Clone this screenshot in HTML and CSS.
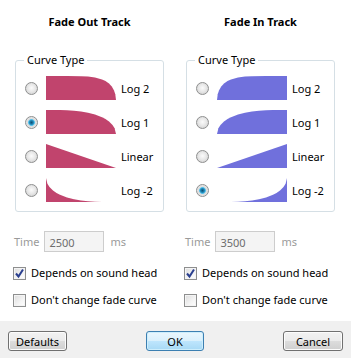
FILE: index.html
```html
<!DOCTYPE html>
<html lang="en">

<head>
    <meta charset="UTF-8">
    <title>Fade Track</title>
    <link rel="stylesheet" href="styles.css">
</head>

<body>
    <div class="dialog">
        <div class="columns">

            <!-- Fade out -->
            <section class="track fade-out">
                <h2 class="track-title">Fade Out Track</h2>
                <fieldset class="curve-group">
                    <legend>Curve Type</legend>
                    <label class="curve-row">
                        <input type="radio" name="outCurve">
                        <svg class="curve" viewBox="0 0 70 24"><path d="M0 24L0 0L21 0L35 .2L42 .6L49 1.5L56 3.4L59.5 5.1L63 7.6L65.8 10.6L67.9 14.2L69.3 18.2L70 24Z"/></svg>
                        <span>Log 2</span>
                    </label>
                    <label class="curve-row">
                        <input type="radio" name="outCurve" checked>
                        <svg class="curve" viewBox="0 0 70 24"><path d="M0 24L0 0L14 .1L21 .33L28 .78L35 1.55L42 2.75L49 4.54L56 7.23L59.5 9.09L63 11.5L66.5 14.9L68.6 18.2L70 24Z"/></svg>
                        <span>Log 1</span>
                    </label>
                    <label class="curve-row">
                        <input type="radio" name="outCurve">
                        <svg class="curve" viewBox="0 0 70 24"><path d="M0 0L70 24L0 24Z"/></svg>
                        <span>Linear</span>
                    </label>
                    <label class="curve-row">
                        <input type="radio" name="outCurve">
                        <svg class="curve" viewBox="0 0 70 24"><path d="M0 0L1.4 5.8L3.5 9.1L7 12.5L10.5 14.9L14 16.8L21 19.5L28 21.2L35 22.4L42 23.2L49 23.7L56 23.9L70 24L0 24Z"/></svg>
                        <span>Log -2</span>
                    </label>
                </fieldset>

                <div class="time-row">
                    <span class="dim">Time</span>
                    <input class="time-input" type="text" value="2500" disabled>
                    <span class="dim">ms</span>
                </div>
                <label class="check">
                    <span class="box"><svg viewBox="0 0 11 11"><path d="M2 5.5L4.5 8.5L9 1.5"/></svg></span>
                    Depends on sound head
                </label>
                <label class="check">
                    <span class="box"></span>
                    Don't change fade curve
                </label>
            </section>

            <!-- Fade in -->
            <section class="track fade-in">
                <h2 class="track-title">Fade In Track</h2>
                <fieldset class="curve-group">
                    <legend>Curve Type</legend>
                    <label class="curve-row">
                        <input type="radio" name="inCurve">
                        <svg class="curve" viewBox="0 0 70 24"><path d="M0 24L0 0L21 0L35 .2L42 .6L49 1.5L56 3.4L59.5 5.1L63 7.6L65.8 10.6L67.9 14.2L69.3 18.2L70 24Z"/></svg>
                        <span>Log 2</span>
                    </label>
                    <label class="curve-row">
                        <input type="radio" name="inCurve">
                        <svg class="curve" viewBox="0 0 70 24"><path d="M0 24L0 0L14 .1L21 .33L28 .78L35 1.55L42 2.75L49 4.54L56 7.23L59.5 9.09L63 11.5L66.5 14.9L68.6 18.2L70 24Z"/></svg>
                        <span>Log 1</span>
                    </label>
                    <label class="curve-row">
                        <input type="radio" name="inCurve">
                        <svg class="curve" viewBox="0 0 70 24"><path d="M0 0L70 24L0 24Z"/></svg>
                        <span>Linear</span>
                    </label>
                    <label class="curve-row">
                        <input type="radio" name="inCurve" checked>
                        <svg class="curve" viewBox="0 0 70 24"><path d="M0 0L1.4 5.8L3.5 9.1L7 12.5L10.5 14.9L14 16.8L21 19.5L28 21.2L35 22.4L42 23.2L49 23.7L56 23.9L70 24L0 24Z"/></svg>
                        <span>Log -2</span>
                    </label>
                </fieldset>

                <div class="time-row">
                    <span class="dim">Time</span>
                    <input class="time-input" type="text" value="3500" disabled>
                    <span class="dim">ms</span>
                </div>
                <label class="check">
                    <span class="box"><svg viewBox="0 0 11 11"><path d="M2 5.5L4.5 8.5L9 1.5"/></svg></span>
                    Depends on sound head
                </label>
                <label class="check">
                    <span class="box"></span>
                    Don't change fade curve
                </label>
            </section>
        </div>

        <!-- Buttons -->
        <div class="button-bar">
            <button type="button" class="btn btn-defaults">Defaults</button>
            <button type="button" class="btn btn-ok">OK</button>
            <button type="button" class="btn btn-cancel">Cancel</button>
        </div>
    </div>
</body>

</html>
```

FILE: styles.css
```css
body {
    margin: 0;
    font-family: "Noto Sans", "Open Sans", sans-serif;
    font-size: 11px;
    color: #000;
    background-color: #fff;
}

.dialog {
    width: 351px;
    height: 358px;
    display: flex;
    flex-direction: column;
}

.columns {
    display: flex;
    gap: 22px;
    padding-left: 15px;
    flex: 1;
}

.track {
    width: 149px;
}

.track-title {
    margin: 14px 0 22px;
    font-size: 11px;
    font-weight: bold;
    line-height: 16px;
    text-align: center;
}

/* Curve Type group box */
.curve-group {
    margin: 0;
    padding: 8px 0 9px 8px;
    border: 1px solid #d5dfe5;
    border-radius: 3px;
    box-shadow: inset 1px 1px 0 #fff;
}

.curve-group legend {
    padding: 0 3px;
    line-height: 16px;
}

.curve-row {
    display: flex;
    align-items: center;
    height: 24px;
    margin-bottom: 10px;
}

.curve-row:last-child {
    margin-bottom: 0;
}

.curve-row input {
    appearance: none;
    margin: 0 8px 0 1px;
    width: 13px;
    height: 13px;
    border-radius: 50%;
    border: 1px solid #8e8f8f;
    background: radial-gradient(circle at 50% 45%, #fbfbfb 0, #e8e8e8 45%, #c9c9c9 100%);
    box-sizing: border-box;
}

.curve-row input:checked {
    background: radial-gradient(circle at 50% 50%, #0f4e73 0, #1f86b5 25%, #5fc6ee 40%, #dcdcdc 48%, #f2f2f2 100%);
}

.curve {
    width: 70px;
    height: 24px;
    flex-shrink: 0;
}

.curve-row span {
    margin-left: 5px;
}

.fade-out .curve path {
    fill: #c1446d;
}

.fade-in .curve {
    transform: scaleX(-1);
}

.fade-in .curve path {
    fill: #7070dc;
}

/* Time row */
.time-row {
    display: flex;
    align-items: center;
    margin: 19px 0 0 -1px;
}

.dim {
    color: #9a9a9a;
}

.time-input {
    width: 60px;
    height: 21px;
    margin: 0 6px 0 5px;
    padding: 2px 0 0 4px;
    box-sizing: border-box;
    border: 1px solid #cdcdcd;
    background-color: #f4f4f4;
    font-family: inherit;
    font-size: 11px;
    color: #6d6d6d;
}

/* Checkboxes */
.check {
    display: flex;
    align-items: center;
    gap: 5px;
    line-height: 16px;
    margin: 13px 0 0 -2px;
}

.check + .check {
    margin-top: 11px;
}

.box {
    width: 13px;
    height: 13px;
    box-sizing: border-box;
    border: 1px solid #8e8f8f;
    background: linear-gradient(135deg, #dcdcdc 0, #f4f4f4 60%, #fff 100%);
    box-shadow: inset 0 0 0 1px #f4f4f4;
    display: flex;
    align-items: center;
    justify-content: center;
}

.box svg {
    width: 11px;
    height: 11px;
}

.box path {
    fill: none;
    stroke: #2a3f8f;
    stroke-width: 2;
}

/* Bottom bar */
.button-bar {
    height: 37px;
    box-sizing: border-box;
    padding: 10px 8px 0;
    background-color: #f0f0f0;
    display: flex;
    justify-content: space-between;
    align-items: flex-start;
}

.btn {
    height: 20px;
    padding: 0;
    border: 1px solid #707070;
    border-radius: 3px;
    background: linear-gradient(#f2f2f2 0, #ebebeb 50%, #dddddd 50%, #cfcfcf 100%);
    box-shadow: inset 0 0 0 1px #fcfcfc;
    font-family: inherit;
    font-size: 11px;
    color: #000;
}

.btn-defaults {
    width: 59px;
}

.btn-ok {
    width: 58px;
    border-color: #3c7fb1;
    background: linear-gradient(#eaf6fd 0, #d9f0fc 50%, #bee6fd 50%, #a7d9f5 100%);
    box-shadow: inset 0 0 0 1px #cdeefc;
}

.btn-cancel {
    width: 60px;
}
```
